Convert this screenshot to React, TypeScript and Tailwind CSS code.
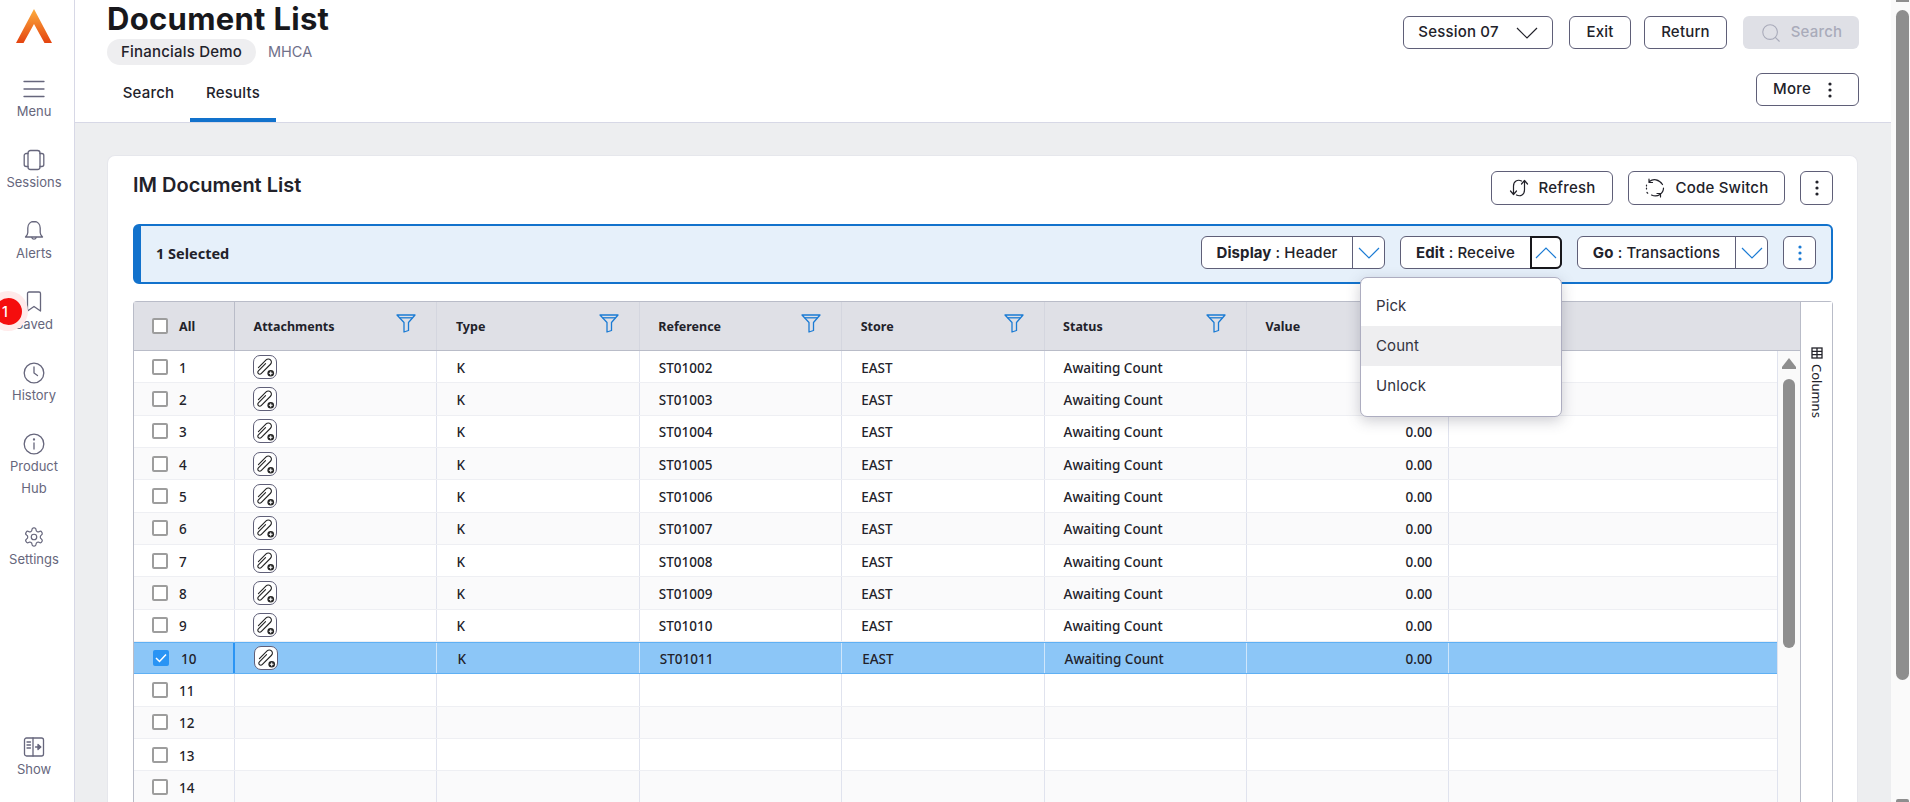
import { Search } from "lucide-react";

const sans = "font-['Inter','Liberation_Sans',sans-serif]";
const tableFont = "font-['Noto_Sans','Liberation_Sans',sans-serif]";

const columns = [
  { label: "Attachments", filter: true },
  { label: "Type", filter: true },
  { label: "Reference", filter: true },
  { label: "Store", filter: true },
  { label: "Status", filter: true },
  { label: "Value", filter: false },
];

const rowNumbers = Array.from({ length: 14 }, (_, i) => i + 1);

function Logo() {
  return (
    <svg width="38" height="36" viewBox="0 0 38 36" className="block">
      <defs>
        <linearGradient id="logoFill" x1="0" y1="0" x2="0" y2="1">
          <stop offset="0" stopColor="#fdae3f" />
          <stop offset="1" stopColor="#e4430f" />
        </linearGradient>
      </defs>
      <path d="M19 1 L37 35 L29.5 35 L19 16 L8.5 35 L1 35 Z" fill="url(#logoFill)" />
    </svg>
  );
}

function NavIcon({ name }: { name: string }) {
  const common = {
    width: 22,
    height: 22,
    viewBox: "0 0 22 22",
    fill: "none",
    stroke: "#66667c",
    strokeWidth: 1.3,
    strokeLinecap: "round" as const,
    strokeLinejoin: "round" as const,
  };
  if (name === "Menu") {
    return (
      <svg {...common}>
        <path d="M1 3.5H21M1 11H21M1 18.5H21" />
      </svg>
    );
  }
  if (name === "Sessions") {
    return (
      <svg {...common}>
        <rect x="5" y="1.5" width="12" height="19" rx="2.5" />
        <path d="M5 4.5H3.2A2 2 0 0 0 1.2 6.5V15.5A2 2 0 0 0 3.2 17.5H5M17 4.5H18.8A2 2 0 0 1 20.8 6.5V15.5A2 2 0 0 1 18.8 17.5H17" />
      </svg>
    );
  }
  if (name === "Alerts") {
    return (
      <svg {...common}>
        <path d="M11 1.5C7.2 1.5 4.8 4.3 4.8 8V12.5C4.8 14.5 3.8 15.6 2.5 17H19.5C18.2 15.6 17.2 14.5 17.2 12.5V8C17.2 4.3 14.8 1.5 11 1.5Z" />
        <path d="M8.8 17.5A2.3 2.3 0 0 0 13.2 17.5" />
      </svg>
    );
  }
  if (name === "Saved") {
    return (
      <svg {...common}>
        <path d="M4.5 2.5A1.5 1.5 0 0 1 6 1H16A1.5 1.5 0 0 1 17.5 2.5V20L11 15.5L4.5 20Z" />
      </svg>
    );
  }
  if (name === "History") {
    return (
      <svg {...common}>
        <circle cx="11" cy="11" r="9.8" />
        <path d="M11 5V11L14.5 13.5" />
      </svg>
    );
  }
  if (name === "Product") {
    return (
      <svg {...common}>
        <circle cx="11" cy="11" r="9.8" />
        <path d="M11 10V16" />
        <circle cx="11" cy="6.5" r="0.5" />
      </svg>
    );
  }
  if (name === "Settings") {
    return (
      <svg {...common} viewBox="0 0 24 24">
        <path d="M12.22 2h-.44a2 2 0 0 0-2 2v.18a2 2 0 0 1-1 1.73l-.43.25a2 2 0 0 1-2 0l-.15-.08a2 2 0 0 0-2.73.73l-.22.38a2 2 0 0 0 .73 2.73l.15.1a2 2 0 0 1 1 1.72v.51a2 2 0 0 1-1 1.74l-.15.09a2 2 0 0 0-.73 2.73l.22.38a2 2 0 0 0 2.73.73l.15-.08a2 2 0 0 1 2 0l.43.25a2 2 0 0 1 1 1.73V20a2 2 0 0 0 2 2h.44a2 2 0 0 0 2-2v-.18a2 2 0 0 1 1-1.73l.43-.25a2 2 0 0 1 2 0l.15.08a2 2 0 0 0 2.73-.73l.22-.39a2 2 0 0 0-.73-2.73l-.15-.08a2 2 0 0 1-1-1.74v-.5a2 2 0 0 1 1-1.74l.15-.09a2 2 0 0 0 .73-2.73l-.22-.38a2 2 0 0 0-2.73-.73l-.15.08a2 2 0 0 1-2 0l-.43-.25a2 2 0 0 1-1-1.73V4a2 2 0 0 0-2-2z" />
        <circle cx="12" cy="12" r="3" />
      </svg>
    );
  }
  return (
    <svg {...common}>
      <rect x="1.5" y="2" width="19" height="18" rx="2" />
      <path d="M10 2V20M4 6H7.5M4 9H7.5M4 12H7.5M12.5 11H17.5" />
      <path d="M15 8.5L17.8 11L15 13.5Z" fill="#66667c" />
    </svg>
  );
}

function Chevron({ up, className }: { up?: boolean; className: string }) {
  return (
    <svg width="22" height="12" viewBox="0 0 22 12" fill="none" className={className}>
      <path d={up ? "M1 11L11 1L21 11" : "M1 1L11 11L21 1"} stroke="currentColor" strokeWidth="1.2" />
    </svg>
  );
}

function Dots({ className }: { className: string }) {
  return (
    <svg width="4" height="16" viewBox="0 0 4 16" className={className}>
      <circle cx="2" cy="2" r="1.6" fill="currentColor" />
      <circle cx="2" cy="8" r="1.6" fill="currentColor" />
      <circle cx="2" cy="14" r="1.6" fill="currentColor" />
    </svg>
  );
}

function FilterIcon() {
  return (
    <svg width="20" height="19" viewBox="0 0 20 19" fill="none" stroke="#1b7bd4" strokeWidth="1.3" strokeLinejoin="round">
      <path d="M1 1H19L12.5 8.5V16.5L8 18V8.5Z" />
      <path d="M3.5 3.8H16.5" />
    </svg>
  );
}

function AttachIcon() {
  return (
    <span className="flex h-[24px] w-[24px] items-center justify-center rounded-[7px] border border-[#5f5f78] bg-white">
      <svg width="22" height="22" viewBox="0 0 20 20" fill="none">
        <path
          d="M4 10.5L11 3.5A2.6 2.6 0 0 1 15 7.5L6.5 16A1.41 1.41 0 0 1 4 13.5L10.5 7"
          stroke="#222"
          strokeWidth="1"
          strokeLinecap="round"
        />
        <circle cx="15.2" cy="15.7" r="3" fill="#222" />
        <path d="M15.2 14V17.4M13.5 15.7H16.9" stroke="#fff" strokeWidth="1" />
      </svg>
    </span>
  );
}

function Checkbox({ checked }: { checked?: boolean }) {
  if (checked) {
    return (
      <span className="flex h-[16px] w-[16px] items-center justify-center rounded-[2px] bg-[#2a94f4]">
        <svg width="12" height="10" viewBox="0 0 12 10" fill="none">
          <path d="M1 5L4.5 8.5L11 1.5" stroke="#fff" strokeWidth="1.5" />
        </svg>
      </span>
    );
  }
  return <span className="block h-[16px] w-[16px] rounded-[2px] border-2 border-[#9d9d9d] bg-white" />;
}

function NavItem({ name, label, second }: { name: string; label: string; second?: string }) {
  return (
    <div className="flex w-full flex-col items-center">
      <NavIcon name={name} />
      <span className="text-[13px] leading-[22px] text-[#66667c]">{label}</span>
      {second && <span className="text-[13px] leading-[22px] text-[#66667c]">{second}</span>}
    </div>
  );
}

function Sidebar() {
  return (
    <aside className="relative flex h-full w-[75px] shrink-0 flex-col items-center border-r border-[#d7d8e6] bg-white pr-[6px]">
      <div className="mt-[8px] mb-[34px]">
        <Logo />
      </div>
      <div className="flex w-full flex-col gap-[27px]">
        <NavItem name="Menu" label="Menu" />
        <NavItem name="Sessions" label="Sessions" />
        <NavItem name="Alerts" label="Alerts" />
        <NavItem name="Saved" label="Saved" />
        <NavItem name="History" label="History" />
        <NavItem name="Product" label="Product" second="Hub" />
        <NavItem name="Settings" label="Settings" />
      </div>
      <div className="mt-auto mb-[22px] w-full">
        <NavItem name="Show" label="Show" />
      </div>
      {/* notification badge hangs off the left edge of the rail */}
      <div className="absolute top-[291px] left-[-12px] flex h-[40px] w-[40px] items-center justify-center rounded-full bg-[#ffeaea]">
        <span className="flex h-[27px] w-[27px] items-center justify-center rounded-full bg-[#f50d0d] text-[14px] font-medium text-white">
          <span className="ml-[-6px]">1</span>
        </span>
      </div>
    </aside>
  );
}

function OutlineButton({ children, className }: { children: React.ReactNode; className: string }) {
  return (
    <button className={`flex items-center justify-center rounded-[6px] border border-[#5f5f78] bg-white text-[15px] font-medium tracking-[0.2px] text-[#22222a] ${className}`}>
      {children}
    </button>
  );
}

function Header() {
  return (
    <header className="flex h-[123px] shrink-0 justify-between border-b border-[#d7d8e6] bg-white pr-[32px] pl-[32px]">
      <div className="flex flex-col">
        <h1 className="mt-[-1px] text-[31px] leading-[39px] font-bold tracking-[0.3px] text-[#18181c]">Document List</h1>
        <div className="mt-[1px] flex items-center">
          <span className="flex h-[26px] w-[149px] items-center justify-center rounded-full bg-[#eeeef0] text-[15px] font-medium tracking-[0.2px] text-[#22222a]">
            Financials Demo
          </span>
          <span className="ml-[12px] text-[14.5px] text-[#70708a]">MHCA</span>
        </div>
        <div className="mt-auto flex tracking-[0.2px]">
          <span className="flex h-[43px] w-[83px] items-center justify-center pb-[15px] text-[15px] font-medium text-[#22222a]">Search</span>
          <span className="flex h-[43px] w-[86px] items-center justify-center border-b-4 border-[#1272cc] pb-[11px] text-[15px] font-medium text-[#22222a]">Results</span>
        </div>
      </div>
      <div className="flex flex-col items-end pt-[16px]">
        <div className="flex gap-[16px]">
          <OutlineButton className="h-[33px] w-[150px] gap-[17px]">
            <span>Session 07</span>
            <Chevron className="text-[#22222a]" />
          </OutlineButton>
          <div className="flex gap-[13px]">
            <OutlineButton className="h-[33px] w-[62px]">Exit</OutlineButton>
            <OutlineButton className="h-[33px] w-[83px]">Return</OutlineButton>
          </div>
          <button className="flex h-[33px] w-[116px] items-center justify-center gap-[9px] rounded-[6px] bg-[#dfe0e6] text-[15px] font-medium tracking-[0.2px] text-[#a9abba]">
            <Search size={22} strokeWidth={1.2} />
            Search
          </button>
        </div>
        <OutlineButton className="mt-[24px] h-[33px] w-[103px] gap-[17px] pr-[10px]">
          More
          <Dots className="text-[#22222a]" />
        </OutlineButton>
      </div>
    </header>
  );
}

function SplitButton({ prefix, value, open, width }: { prefix: string; value: string; open?: boolean; width: string }) {
  return (
    <div className="relative flex h-[33px] rounded-[6px] border border-[#5f5f78] bg-white text-[15px] tracking-[0.1px] text-[#22222a]">
      <span className={`flex items-center justify-center pt-[1px] font-medium ${width}`}>
        <b className="font-bold">{prefix}</b>&nbsp;:&nbsp;{value}
      </span>
      {open ? (
        <span className="mt-[-1px] mr-[-1px] mb-[-1px] flex w-[32px] items-center justify-center rounded-r-[6px] border-2 border-[#18181c]">
          <Chevron up className="text-[#1b7bd4]" />
        </span>
      ) : (
        <span className="flex w-[32px] items-center justify-center border-l border-[#5f5f78]">
          <Chevron className="text-[#1b7bd4]" />
        </span>
      )}
      {open && (
        <div className="absolute top-[40px] right-[-1px] z-10 flex h-[140px] w-[202px] flex-col rounded-[7px] border border-[#adadc0] bg-white pt-[9px] text-[15px] font-normal text-[#333340] shadow-[0_4px_14px_rgba(60,60,80,0.25)]">
          <span className="flex h-[39px] items-center pl-[15px]">Pick</span>
          <span className="flex h-[40px] items-center bg-[#eeeef0] pl-[15px]">Count</span>
          <span className="flex h-[40px] items-center pl-[15px]">Unlock</span>
        </div>
      )}
    </div>
  );
}

function SelectionBar() {
  return (
    <div className="mt-[19px] flex h-[60px] items-center justify-between rounded-[6px] border-2 border-l-[8px] border-[#1272cc] bg-[#e6f0fa] pr-[15px] pb-[3px] pl-[15px]">
      <span className={`${tableFont} mt-[2px] text-[14.5px] font-bold text-[#22222a]`}>1 Selected</span>
      <div className="flex items-center gap-[15px]">
        <SplitButton prefix="Display" value="Header" width="w-[150px]" />
        <SplitButton prefix="Edit" value="Receive" open width="w-[129px]" />
        <SplitButton prefix="Go" value="Transactions" width="w-[157px]" />
        <button className="flex h-[33px] w-[33px] items-center justify-center rounded-[6px] border border-[#5f5f78] bg-white">
          <Dots className="text-[#1b7bd4]" />
        </button>
      </div>
    </div>
  );
}

function Row({ n }: { n: number }) {
  const filled = n <= 10;
  const selected = n === 10;
  // rows 1 and 2 have their value hidden behind the open Edit menu
  const showValue = filled && n > 2;
  const cell = selected ? "border-r border-[#cfe6fb]" : "border-r border-[#e0e3ee]";
  const ref = `ST0${1001 + n}`;
  const values = ["K", ref, "EAST", "Awaiting Count"];

  return (
    <div
      className={`grid h-[32.35px] grid-cols-[101px_repeat(6,202.4px)_1fr] border-b text-[13.5px] font-medium text-[#22222a] ${
        selected ? "border-y border-[#5fb0f4] bg-[#8cc6f7]" : n % 2 === 0 ? "border-[#eeeff3] bg-[#fafafb]" : "border-[#eeeff3] bg-white"
      }`}
    >
      <div className={`flex items-center gap-[11px] ${selected ? "border-r-2 border-[#2a94f4] pl-[19px]" : "border-r border-[#e0e3ee] pl-[18px]"}`}>
        <Checkbox checked={selected} />
        <span className={selected ? "mt-[2px] ml-[1px]" : "mt-[2px]"}>{n}</span>
      </div>
      <div className={`flex items-center ${cell} ${selected ? "pl-[19px]" : "pl-[18px]"}`}>{filled && <AttachIcon />}</div>
      {values.map((v, i) => (
        <div key={i} className={`flex items-center pt-[2px] ${cell} ${selected ? "pl-[20px]" : "pl-[19px]"}`}>
          {filled && v}
        </div>
      ))}
      <div className={`flex items-center justify-end pt-[2px] pr-[16px] ${cell}`}>{showValue && "0.00"}</div>
      <div />
    </div>
  );
}

function Table() {
  return (
    <div className={`${tableFont} mt-[17px] flex min-h-0 flex-1 rounded-t-[4px] border border-b-0 border-[#b9bcc8]`}>
      <div className="flex min-w-0 flex-1 flex-col">
        <div className="flex h-[49px] shrink-0 border-b border-[#b9bcc8] bg-[#dfe0e6] text-[12.5px] font-bold text-[#22222a]">
          <div className="flex w-[101px] shrink-0 items-center gap-[11px] border-r border-[#b9bcc8] pl-[18px]">
            <Checkbox />
            <span className="mt-[2px]">All</span>
          </div>
          {columns.map((c) => (
            <div key={c.label} className="flex w-[202.4px] shrink-0 items-center justify-between border-r border-[#d4d6df] pr-[20px] pl-[18.5px]">
              <span className="mt-[2px]">{c.label}</span>
              {c.filter && (
                <span className="mt-[-5px]">
                  <FilterIcon />
                </span>
              )}
            </div>
          ))}
        </div>
        <div className="flex min-h-0 flex-1">
          <div className="min-w-0 flex-1 overflow-hidden">
            {rowNumbers.map((n) => (
              <Row key={n} n={n} />
            ))}
          </div>
          <div className="flex w-[23px] shrink-0 flex-col items-center border-l border-[#e0e3ee] bg-[#fafafa] pt-[7px]">
            <svg width="14" height="11" viewBox="0 0 14 11">
              <path d="M7 0L14 9V11H0V9Z" fill="#8e8e8e" />
            </svg>
            <div className="mt-[10px] h-[269px] w-[12px] rounded-full bg-[#8e8e8e]" />
          </div>
        </div>
      </div>
      <div className="flex w-[32px] shrink-0 flex-col items-center border-l border-[#b9bcc8] bg-white pt-[45px] pl-[1px]">
        <svg width="12" height="12" viewBox="0 0 12 12" fill="none" stroke="#22222a" strokeWidth="1.3">
          <rect x="1" y="1" width="10" height="10" />
          <path d="M1 4.3H11M1 7.6H11M6 1V11" />
        </svg>
        <span className="mt-[5px] text-[13px] leading-[16px] text-[#22222a] [writing-mode:vertical-rl]">Columns</span>
      </div>
    </div>
  );
}

export default function App() {
  return (
    <div className={`${sans} flex h-[802px] w-full overflow-hidden bg-white`}>
      <Sidebar />
      <main className="flex min-w-0 flex-1 flex-col">
        <Header />
        <div className="flex min-h-0 flex-1 flex-col bg-[#edeef0] pt-[32px] pr-[33px] pl-[32px]">
          <section className="flex min-h-0 flex-1 flex-col rounded-t-[8px] border border-b-0 border-[#e6e7ec] bg-white pt-[15px] pr-[24px] pl-[25px]">
            <div className="flex items-start justify-between">
              <h2 className="mt-[1px] text-[20px] leading-[26px] font-semibold text-[#22222a]">IM Document List</h2>
              <div className="flex gap-[15px]">
                <OutlineButton className="h-[34px] w-[122px] gap-[10px]">
                  <svg width="20" height="22" viewBox="0 0 20 22" fill="none" stroke="#22222a" strokeWidth="1.2" strokeLinecap="round" strokeLinejoin="round">
                    <path d="M12.5 4C8.5 2 4.5 4.5 4.5 9V17M1.5 14L4.5 17.5L7.5 14" />
                    <path d="M7.5 18C11.5 20 15.5 17.5 15.5 13V4M12.5 7L15.5 3.5L18.5 7" />
                  </svg>
                  Refresh
                </OutlineButton>
                <OutlineButton className="h-[34px] w-[157px] gap-[11px]">
                  <svg width="20" height="20" viewBox="0 0 20 20" fill="none" stroke="#22222a" strokeWidth="1.2" strokeLinecap="round" strokeLinejoin="round">
                    <path d="M4.5 3.5C8 0.5 14 1 17.5 6.5M4 1V4.5H7.5" />
                    <path d="M18.5 10C18.5 15 13 20 6.5 17M15.5 19V15.5H12" />
                    <path d="M1.5 7V13" strokeDasharray="1 2" />
                    <path d="M2 14.5L4 16.5" strokeDasharray="1 2" />
                  </svg>
                  Code Switch
                </OutlineButton>
                <OutlineButton className="h-[34px] w-[33px]">
                  <Dots className="text-[#22222a]" />
                </OutlineButton>
              </div>
            </div>
            <SelectionBar />
            <Table />
          </section>
        </div>
      </main>
      {/* browser scrollbar */}
      <div className="flex w-[19px] shrink-0 flex-col bg-[#fafafa] pl-[5px]">
        <div className="h-[2px] w-[13px] bg-[#8e8e8e]" />
        <div className="mt-[8px] h-[670px] w-[13px] rounded-full bg-[#8e8e8e]" />
        <div className="mt-auto h-[3px] w-[13px] rounded-t-[2px] bg-[#8e8e8e]" />
      </div>
    </div>
  );
}
